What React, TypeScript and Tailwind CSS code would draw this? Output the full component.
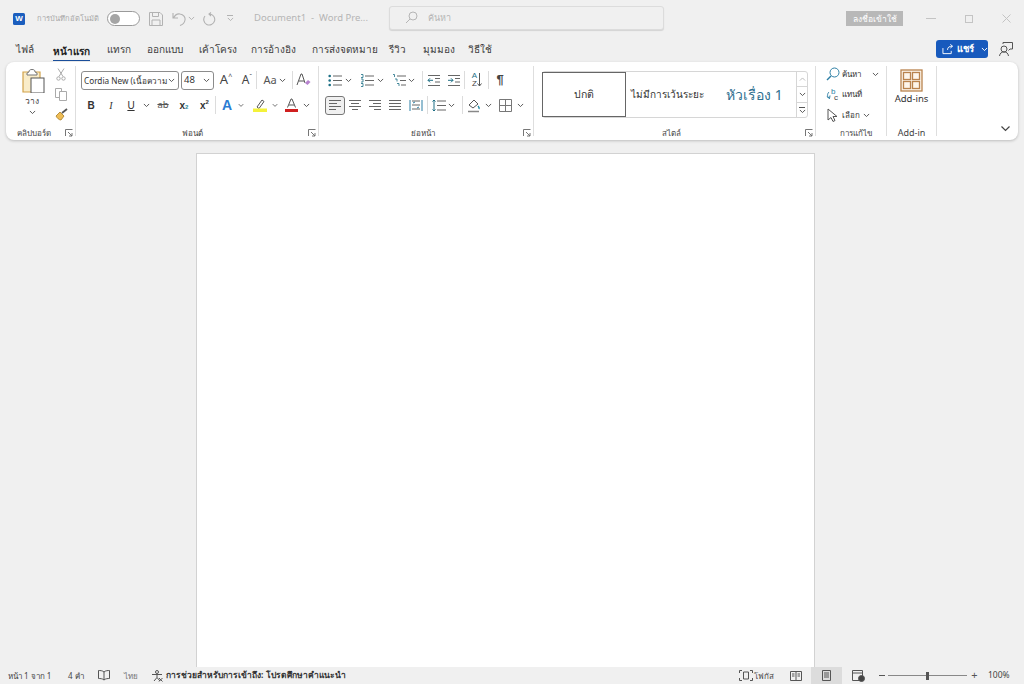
import React from "react";

const Chev = ({ c = "#555" }: { c?: string }) => (
  <svg width="7" height="4.500" viewBox="0 0 8 5" fill="none"><path d="M1 1l3 3 3-3" stroke={c} strokeWidth="1.1" /></svg>
);
const Launcher = () => (
  <svg width="8" height="8" viewBox="0 0 8 8" fill="none" stroke="#666" strokeWidth="0.9"><path d="M0.5 7V0.5H7.5" /><path d="M3 3l4 4M4 7h3V4" /></svg>
);
const Lines = ({ kind }: { kind: "l" | "c" | "r" | "j" }) => {
  const rows = { l: [[1, 13], [1, 9], [1, 13], [1, 8]], c: [[1, 13], [3, 11], [1, 13], [4, 10]], r: [[1, 13], [5, 13], [1, 13], [6, 13]], j: [[1, 13], [1, 13], [1, 13], [1, 13]] }[kind];
  return (
    <svg width="14" height="12" viewBox="0 0 14 12" stroke="#666" strokeWidth="1">
      {rows.map((r, i) => <path key={i} d={`M${r[0]} ${1.5 + i * 3}H${r[1]}`} />)}
    </svg>
  );
};
const ListIcon = ({ kind }: { kind: "b" | "n" | "m" }) => (
  <svg width="14" height="13" viewBox="0 0 14 13" fill="none">
    {kind === "b" && [2, 6.5, 11].map((y) => <circle key={y} cx="1.7" cy={y} r="1.3" fill="#1c6f85" />)}
    {kind === "n" && [2, 6.5, 11].map((y) => <path key={y} d={`M1 ${y - 1.5}h2v3H1`} stroke="#1c6f85" strokeWidth="0.8" />)}
    {kind === "m" && <path d="M1 .5h1.500v2.500M3 5h2v2.500M5 9.500h2v2.500" stroke="#1c6f85" strokeWidth="0.8" />}
    <path d={kind === "m" ? "M5 2h9M8 6.500h6M9 11h5" : "M5 2h9M5 6.500h9M5 11h9"} stroke="#666" strokeWidth="1" />
  </svg>
);
const Indent = ({ out }: { out?: boolean }) => (
  <svg width="14" height="13" viewBox="0 0 14 13" fill="none">
    <path d="M1 1.500h12M8 4.500h5M8 8h5M1 11.500h12" stroke="#666" strokeWidth="1" />
    <path d={out ? "M6 6.300H1M3 4.300l-2 2 2 2" : "M1 6.300h5M4 4.300l2 2-2 2"} stroke="#1c6f85" strokeWidth="1" />
  </svg>
);
const Sep = () => <div className="w-px h-[18px] bg-[#dcdcdc] shrink-0" />;
const Slot = ({ className = "", children }: { className?: string; children?: React.ReactNode }) => (
  <div className={`flex items-center justify-center shrink-0 h-[18px] ${className}`}>{children}</div>
);
const Group = ({ className, label, launcher, labelClass = "text-[8px]", children }: { className: string; label: string; launcher?: boolean; labelClass?: string; children: React.ReactNode }) => (
  <div className={`flex flex-col shrink-0 h-[70px] mt-[4px] border-r border-[#dedede] ${className}`}>
    <div className="flex-1 min-h-0">{children}</div>
    <div className="flex items-center h-[13px] mb-[-3px]">
      <div className={`flex-1 text-center leading-[13px] text-[#444] whitespace-nowrap ${labelClass} ${launcher ? "pr-[4px]" : ""}`}>{label}</div>
      {launcher ? <div className="w-[10px] flex justify-start shrink-0"><Launcher /></div> : null}
    </div>
  </div>
);

const tabs: [string, string, boolean?][] = [
  ["ไฟล์", "w-[37px]"],
  ["หน้าแรก", "w-[54px]", true],
  ["แทรก", "w-[40px]"],
  ["ออกแบบ", "w-[52px]"],
  ["เค้าโครง", "w-[52px]"],
  ["การอ้างอิง", "w-[61px]"],
  ["การส่งจดหมาย", "w-[77px]"],
  ["รีวิว", "w-[34px]"],
  ["มุมมอง", "w-[45px]"],
  ["วิธีใช้", "w-[40px]"],
];

export default function App() {
  return (
    <div className="w-[1024px] h-[684px] overflow-hidden flex flex-col bg-[#f0f0f0] text-[#333] font-['Noto_Sans','Liberation_Sans',sans-serif]">
      {/* title bar */}
      <div className="h-[36px] shrink-0 flex items-center pl-[13px] pt-[1px]">
        <div className="w-[12px] h-[12px] rounded-[1.5px] bg-[#1b5ebe] flex items-center justify-center text-white text-[8px] leading-none font-bold font-['Liberation_Sans',sans-serif] shrink-0">W</div>
        <div className="w-[65px] ml-[12px] text-[7.5px] text-[#a9a9a9] whitespace-nowrap shrink-0">การบันทึกอัตโนมัติ</div>
        <div className="w-[33px] h-[15px] ml-[5px] rounded-full border border-[#9a9a9a] bg-white flex items-center pl-[2px] shrink-0">
          <div className="w-[10px] h-[10px] rounded-full bg-[#a5a5a5]" />
        </div>
        <svg className="ml-[9px] shrink-0" width="14" height="14" viewBox="0 0 14 14" fill="none" stroke="#b2b2b2" strokeWidth="1"><path d="M.5.500h10.500l2.500 2.500v10.500H.5zM3.500.500v4h6v-4M3 13.500V8h8v5.500" /></svg>
        <svg className="ml-[9px] shrink-0" width="15" height="14" viewBox="0 0 15 14" fill="none" stroke="#b2b2b2" strokeWidth="1.1"><path d="M1 1v5h5M1.500 6C3 3 5.500 1.500 8 2c3.500.5 5.500 3 5 6-.4 2.500-2 4.500-5 5.500" /></svg>
        <div className="w-[9px] flex justify-center shrink-0"><Chev c="#b2b2b2" /></div>
        <svg className="ml-[6px] shrink-0" width="15" height="15" viewBox="0 0 15 15" fill="none" stroke="#b2b2b2" strokeWidth="1.1"><path d="M9 1.500l-2 1.500 2 2M7.500 3A5.500 5.500 0 1 1 3 5" /></svg>
        <div className="ml-[8px] w-[10px] flex flex-col items-center gap-[1px] shrink-0"><div className="w-[6px] h-px bg-[#b2b2b2]" /><Chev c="#b2b2b2" /></div>
        <div className="ml-[19px] w-[135px] text-[9.5px] text-[#b5b5b5] whitespace-nowrap shrink-0">Document1&nbsp; - &nbsp;Word Pre...</div>
        <div className="h-[24px] w-[275px] rounded-[3px] border border-[#dcdcdc] bg-[#f0f0f0] shadow-[0_1px_1px_rgba(0,0,0,0.12)] flex items-center pl-[15px] shrink-0 -mt-[2px]">
          <svg width="13" height="13" viewBox="0 0 13 13" fill="none" stroke="#b5b5b5" strokeWidth="1"><circle cx="8" cy="5" r="4" /><path d="M5 8l-4 4" /></svg>
          <span className="ml-[10px] text-[9px] text-[#b5b5b5]">ค้นหา</span>
        </div>
        <div className="ml-[182px] w-[57px] h-[15px] bg-[#b8b8b8] text-white text-[8.5px] leading-[15px] text-center shrink-0 whitespace-nowrap">ลงชื่อเข้าใช้</div>
        <div className="ml-[23px] w-[10px] h-px bg-[#c4c4c4] shrink-0" />
        <div className="ml-[29px] w-[8px] h-[8px] border border-[#c4c4c4] shrink-0" />
        <svg className="ml-[29px] shrink-0" width="9" height="9" viewBox="0 0 9 9" stroke="#c4c4c4" strokeWidth="1"><path d="M.5.500l8 8M8.500.500l-8 8" /></svg>
      </div>

      {/* tabs */}
      <div className="h-[26px] shrink-0 flex items-center pl-[16px] pr-[11px]">
        {tabs.map(([t, w, active]) => (
          <div key={t} className={`${w} shrink-0 h-[26px] flex items-center`}>
            <span className={active ? "h-[23px] mt-[1px] leading-[26px] text-[10px] font-bold text-[#222] border-b-[1.5px] border-[#1b4f9c] whitespace-nowrap" : "text-[10px] text-[#3c3c3c] whitespace-nowrap"}>{t}</span>
          </div>
        ))}
        <div className="ml-[428px] w-[52px] h-[18px] rounded-[3px] bg-[#185abd] flex items-center pl-[6px] shrink-0">
          <svg width="13" height="12" viewBox="0 0 13 12" fill="none" stroke="#fff" strokeWidth="1"><path d="M1 5v6h9V8M6 7c0-3 2-4 5-4M9 1l2.500 2L9 5" /></svg>
          <span className="ml-[3px] text-[9.5px] font-bold text-white whitespace-nowrap">แชร์</span>
          <div className="ml-[7px]"><Chev c="#fff" /></div>
        </div>
        <svg className="ml-[11px] shrink-0" width="14" height="15" viewBox="0 0 14 15" fill="none" stroke="#555" strokeWidth="1"><circle cx="5" cy="7" r="3" /><path d="M.5 14c.5-3 2-4 4.500-4s4 1 4.500 4M4 2V.5h9.500V7H11l-1.500 1.500" /></svg>
      </div>

      {/* ribbon */}
      <div className="mx-[6px] h-[78px] shrink-0 rounded-[8px] bg-white shadow-[0_1px_3px_rgba(0,0,0,0.22)] flex">
        {/* clipboard */}
        <Group className="w-[70px]" label="คลิปบอร์ด" launcher>
          <div className="flex h-full">
            <div className="w-[50px] pl-[15px] flex flex-col">
              <svg className="mt-[3px]" width="24" height="24" viewBox="0 0 24 24" fill="none">
                <path d="M4 3h15v20H2V3z" fill="#f9ecc9" stroke="#d1a24a" strokeWidth="1.200" />
                <path d="M8 3c0-2 1-2.500 3-2.500S14 1 14 3l2 1v2H6V4z" fill="#fff" stroke="#777" />
                <rect x="10" y="9" width="13" height="15" fill="#fff" stroke="#555" />
              </svg>
              <div className="text-[8.5px] leading-[12px] text-[#444] mt-[2px] w-[22px] text-center">วาง</div>
              <div className="w-[22px] flex justify-center mt-[3px]"><Chev /></div>
            </div>
            <div className="flex flex-col items-center w-[10px] pt-[2px] gap-[7px]">
              <svg width="10" height="13" viewBox="0 0 10 13" fill="none" stroke="#aaa" strokeWidth="1"><path d="M2 .5l5 8M8 .5l-5 8" /><circle cx="2.500" cy="10.500" r="1.700" /><circle cx="7.500" cy="10.500" r="1.700" /></svg>
              <svg width="12" height="13" viewBox="0 0 12 13" fill="none" stroke="#aaa" strokeWidth="1"><path d="M.5.500h6v9h-6z" /><path d="M4.500 3.500h7v9h-7z" fill="#fff" /></svg>
              <svg width="13" height="13" viewBox="0 0 13 13" fill="none"><path d="M1 8l4-4 4 4-3 4c-2 0-4-2-5-4z" fill="#efbd55" stroke="#a57c2a" strokeWidth=".8" /><path d="M7 5l5-4" stroke="#555" strokeWidth="1.800" /></svg>
            </div>
          </div>
        </Group>

        {/* font */}
        <Group className="w-[243px] pl-[5px]" label="ฟอนต์" launcher>
          <div className="flex items-center h-[20px] mt-[4px]">
            <div className="w-[98px] h-[19px] rounded-[3px] border border-[#8c8c8c] flex items-center pl-[2px] pr-[3px] shrink-0">
              <span className="flex-1 whitespace-nowrap text-[8.2px] leading-[12px] pt-[2px] text-[#333]">Cordia New (เนื้อความ</span><Chev />
            </div>
            <div className="ml-[2px] w-[33px] h-[19px] rounded-[3px] border border-[#8c8c8c] flex items-center pl-[2px] pr-[3px] shrink-0">
              <span className="flex-1 text-[9.5px] text-[#333]">48</span><Chev />
            </div>
            <Slot className="w-[18px] ml-[3px] text-[13px] text-[#444]">A<sup className="text-[7px]">^</sup></Slot>
            <Slot className="w-[18px] ml-[3px] text-[12px] text-[#444]">A<sup className="text-[7px]">ˇ</sup></Slot>
            <Sep />
            <Slot className="w-[16px] ml-[5px] text-[11px] text-[#555]">Aa</Slot>
            <Slot className="w-[8px]"><Chev /></Slot>
            <Slot className="w-[6px]" />
            <Sep />
            <Slot className="w-[15px] ml-[3px]">
              <svg width="15" height="14" viewBox="0 0 15 14" fill="none"><path d="M1 12L5 1h1l3 9M3 8h5" stroke="#555" /><path d="M9 10l3-3 2.500 2-3 3z" fill="#b783cf" /></svg>
            </Slot>
          </div>
          <div className="flex items-center h-[20px] mt-[5px] pl-[1px] text-[#333]">
            <Slot className="w-[18px] text-[10px] font-bold font-['Liberation_Sans',sans-serif]">B</Slot>
            <Slot className="w-[22px] text-[10px] italic font-['Liberation_Serif',serif]">I</Slot>
            <Slot className="w-[18px] text-[10px] underline font-['Liberation_Sans',sans-serif]">U</Slot>
            <Slot className="w-[12px]"><Chev /></Slot>
            <Slot className="w-[22px] text-[9.5px] line-through text-[#555]">ab</Slot>
            <Slot className="w-[20px] text-[10px] font-bold font-['Liberation_Sans',sans-serif]">x<sub className="text-[6px] text-[#2a8a9a]">2</sub></Slot>
            <Slot className="w-[21px] text-[10px] font-bold font-['Liberation_Sans',sans-serif]">x<sup className="text-[6px]">2</sup></Slot>
            <Sep />
            <Slot className="w-[22px] text-[14px] font-bold text-[#2b7cd3] font-['Liberation_Sans',sans-serif]">A</Slot>
            <Slot className="w-[6px]"><Chev /></Slot>
            <Slot className="w-[24px] ml-[4px]">
              <svg width="14" height="14" viewBox="0 0 14 14" fill="none"><path d="M4 9l5-7 2 1.500-5 7z" stroke="#555" /><rect y="10.500" width="14" height="3.500" fill="#f4f23a" /></svg>
            </Slot>
            <Slot className="w-[6px]"><Chev /></Slot>
            <Slot className="w-[22px] ml-[2px]">
              <svg width="13" height="14" viewBox="0 0 13 14" fill="none"><path d="M2.500 9.500L6 1h1l3.500 8.500M4 7h5" stroke="#555" /><rect y="11" width="13" height="3" fill="#d01f1f" /></svg>
            </Slot>
            <Slot className="w-[8px]"><Chev /></Slot>
          </div>
        </Group>

        {/* paragraph */}
        <Group className="w-[215px] pl-[7px]" label="ย่อหน้า" launcher>
          <div className="flex items-center h-[20px] mt-[4px]">
            <Slot className="w-[18px]"><ListIcon kind="b" /></Slot>
            <Slot className="w-[9px]"><Chev /></Slot>
            <Slot className="w-[20px] ml-[4px]"><ListIcon kind="n" /></Slot>
            <Slot className="w-[9px] ml-[-1px]"><Chev /></Slot>
            <Slot className="w-[18px] ml-[5px]"><ListIcon kind="m" /></Slot>
            <Slot className="w-[8px] ml-[-1px]"><Chev /></Slot>
            <Slot className="w-[7px]" /><Sep />
            <Slot className="w-[20px] ml-[1px]"><Indent out /></Slot>
            <Slot className="w-[20px]"><Indent /></Slot>
            <Sep />
            <Slot className="w-[22px] ml-[1px] text-[8px] leading-[8px] font-['Liberation_Sans',sans-serif]">
              <div className="flex flex-col items-center text-[#1c6f85]">A<span className="text-[#444]">Z</span></div>
              <svg width="5" height="14" viewBox="0 0 5 14" fill="none" stroke="#555"><path d="M2.500 0v13M.5 10.500l2 2.500 2-2.500" /></svg>
            </Slot>
            <Sep />
            <Slot className="w-[22px] text-[13px] font-bold text-[#444] font-['Liberation_Sans',sans-serif]">¶</Slot>
          </div>
          <div className="flex items-center h-[20px] mt-[5px] ml-[-1px]">
            <div className="w-[20px] h-[19px] rounded-[3px] border border-[#777] bg-[#f0f0f0] flex items-center justify-center shrink-0"><Lines kind="l" /></div>
            <Slot className="w-[20px]"><Lines kind="c" /></Slot>
            <Slot className="w-[20px]"><Lines kind="r" /></Slot>
            <Slot className="w-[20px]"><Lines kind="j" /></Slot>
            <Slot className="w-[22px]">
              <svg width="14" height="13" viewBox="0 0 14 13" fill="none"><path d="M1 1v11M13 1v11" stroke="#2d7fa5" /><path d="M3 2h8M3 6h8M3 10h8" stroke="#666" /><path d="M4 4l2-1M10 8l-2 1" stroke="#2d7fa5" /></svg>
            </Slot>
            <Sep />
            <Slot className="w-[17px] ml-[2px]">
              <svg width="14" height="13" viewBox="0 0 14 13" fill="none"><path d="M5 2h9M5 6.500h9M5 11h9" stroke="#666" /><path d="M2 1v11M.5 2.500L2 1l1.500 1.500M.5 10.500L2 12l1.500-1.500" stroke="#1c6f85" /></svg>
            </Slot>
            <Slot className="w-[9px]"><Chev /></Slot>
            <Slot className="w-[6px]" /><Sep />
            <Slot className="w-[18px] ml-[2px]">
              <svg width="14" height="15" viewBox="0 0 14 15" fill="none"><path d="M2 7l5-5 4 4-5 4z" stroke="#555" /><path d="M11 8c1 1 1.500 2 1 3" stroke="#1c8aa5" strokeWidth="1.400" /><path d="M1 13.500h11" stroke="#888" strokeWidth="1.500" /></svg>
            </Slot>
            <Slot className="w-[8px] ml-[1px]"><Chev /></Slot>
            <Slot className="w-[19px] ml-[4px]">
              <svg width="13" height="13" viewBox="0 0 13 13" fill="none" stroke="#777"><path d="M.5.500h12v12H.5zM6.500.500v12M.5 6.500h12" /></svg>
            </Slot>
            <Slot className="w-[8px] ml-[1px]"><Chev /></Slot>
          </div>
        </Group>

        {/* styles */}
        <Group className="w-[282px] pl-[8px]" label="สไตล์" launcher>
          <div className="flex h-[47px] w-[266px] mt-[5px] rounded-[3px] border border-[#d6d6d6]">
            <div className="w-[84px] h-full border-[1.5px] border-[#666] flex items-center justify-center text-[10.5px] text-[#333] shrink-0 -ml-px">ปกติ</div>
            <div className="w-[170px] flex items-center pl-[5px] shrink-0">
              <span className="w-[76px] whitespace-nowrap text-[10px] text-[#333] shrink-0">ไม่มีการเว้นระยะ</span>
              <span className="ml-[19px] text-[14px] text-[#2f6f8f] whitespace-nowrap">หัวเรื่อง 1</span>
            </div>
            <div className="flex-1 flex flex-col border-l border-[#d6d6d6]">
              <div className="flex-1 flex items-center justify-center border-b border-[#d6d6d6]"><div className="rotate-180 flex"><Chev c="#bbb" /></div></div>
              <div className="flex-1 flex items-center justify-center border-b border-[#d6d6d6]"><Chev /></div>
              <div className="flex-1 flex flex-col items-center justify-center gap-px"><div className="w-[6px] h-px bg-[#555]" /><Chev /></div>
            </div>
          </div>
        </Group>

        {/* editing */}
        <Group className="w-[71px] pl-[10px]" label="การแก้ไข">
          <div className="flex items-center h-[20px] text-[8px] text-[#333] -mt-[2px]">
            <svg className="shrink-0" width="14" height="14" viewBox="0 0 14 14" fill="none" stroke="#2d7fa5"><circle cx="8.500" cy="5.500" r="4.500" /><path d="M5 9l-4 4" strokeWidth="1.500" /></svg>
            <span className="ml-[2px] w-[30px] whitespace-nowrap">ค้นหา</span>
            <Chev />
          </div>
          <div className="flex items-center h-[20px] text-[8px] text-[#333]">
            <svg className="shrink-0" width="14" height="14" viewBox="0 0 14 14" fill="none">
              <path d="M3 5C1 7 1 10 3.500 11.500M.8 9.500l2.700 2 .5-3" stroke="#2d7fa5" />
              <text x="5" y="6.500" fontSize="8" fill="#2d7fa5" fontFamily="Liberation Sans">b</text>
              <text x="8" y="13" fontSize="8" fill="#444" fontFamily="Liberation Sans">c</text>
            </svg>
            <span className="ml-[2px] whitespace-nowrap">แทนที่</span>
          </div>
          <div className="flex items-center h-[20px] mt-[1px] text-[8px] text-[#333]">
            <svg className="shrink-0 ml-[1px]" width="11" height="14" viewBox="0 0 11 14" fill="#fff" stroke="#555"><path d="M1 1v11l3-2.500 2 4 2-1-2-4h4z" /></svg>
            <span className="ml-[4px] whitespace-nowrap">เลือก</span>
            <span className="ml-[3px]"><Chev /></span>
          </div>
        </Group>

        {/* add-in */}
        <Group className="w-[50px]" label="Add-in" labelClass="text-[9px]">
          <div className="flex flex-col items-center">
            <svg className="mt-[3px]" width="23" height="23" viewBox="0 0 23 23" fill="#fdf5ea" stroke="#b9834d" strokeWidth="1.300"><rect x="1" y="1" width="21" height="21" /><rect x="3.500" y="3.500" width="7" height="7" /><rect x="12.500" y="3.500" width="7" height="7" /><rect x="3.500" y="12.500" width="7" height="7" /><rect x="12.500" y="12.500" width="7" height="7" /></svg>
            <span className="text-[9.5px] leading-[13px] text-[#333] whitespace-nowrap">Add-ins</span>
          </div>
        </Group>

        <div className="flex-1 flex items-end justify-end pr-[8px] pb-[8px]">
          <svg width="9" height="6" viewBox="0 0 9 6" fill="none" stroke="#444" strokeWidth="1.200"><path d="M.5.500l4 4 4-4" /></svg>
        </div>
      </div>

      {/* document area */}
      <div className="flex-1 min-h-0 flex justify-center pr-[13px] pt-[13px]">
        <div className="w-[619px] bg-white border border-[#d2d2d2] border-b-0" />
      </div>

      {/* status bar */}
      <div className="h-[17px] shrink-0 flex items-center text-[8px] text-[#444] pl-[8px]">
        <span className="w-[60px] whitespace-nowrap shrink-0">หน้า 1 จาก 1</span>
        <span className="w-[30px] whitespace-nowrap shrink-0">4 คำ</span>
        <svg className="shrink-0" width="12" height="11" viewBox="0 0 12 11" fill="none" stroke="#555"><path d="M6 2C4.500.5 2 .5.500.5v8C2 8.500 4.500 8.500 6 10c1.500-1.500 4-1.500 5.500-1.500v-8C10 .5 7.500.5 6 2zM6 2v8" /></svg>
        <span className="ml-[14px] w-[27px] text-[#777] shrink-0">ไทย</span>
        <svg className="shrink-0" width="12" height="12" viewBox="0 0 12 12" fill="none" stroke="#555"><circle cx="6" cy="2" r="1.500" /><path d="M1 4.500h10M6 4.500v3L3 11M6 7.500l3 3.500" /><path d="M8 8l3.500 3.500M11.500 8L8 11.500" /></svg>
        <span className="ml-[3px] w-[573px] font-bold text-[8.5px] text-[#333] whitespace-nowrap shrink-0">การช่วยสำหรับการเข้าถึง: โปรดศึกษาคำแนะนำ</span>
        <svg className="shrink-0" width="14" height="11" viewBox="0 0 14 11" fill="none" stroke="#555"><path d="M.5 3V.5H3M11 .5h2.500V3M.5 8v2.500H3M11 10.500h2.500V8M4.500 2h5v7h-5z" /></svg>
        <span className="ml-[1px] w-[36px] whitespace-nowrap shrink-0">โฟกัส</span>
        <svg className="shrink-0" width="12" height="10" viewBox="0 0 12 10" fill="none" stroke="#555"><path d="M.5.500h11v9H.5zM6 .5v9M2 3h2.500M2 5h2.500M7.500 3H10M7.500 5H10" /></svg>
        <div className="ml-[9px] w-[31px] h-[17px] bg-[#dcdcdc] flex items-center justify-center shrink-0">
          <svg width="9" height="11" viewBox="0 0 9 11" fill="none" stroke="#555"><path d="M.5.500h8v10h-8zM2 3h5M2 5h5M2 7h5" /></svg>
        </div>
        <svg className="ml-[10px] shrink-0" width="13" height="12" viewBox="0 0 13 12" fill="none" stroke="#555"><path d="M.5.500h10v10H.5zM.5 3h10" /><circle cx="9.500" cy="8.500" r="3" fill="#444" /></svg>
        <div className="ml-[14px] w-[6px] h-px bg-[#555] shrink-0" />
        <div className="ml-[3px] w-[79px] h-[9px] flex items-center shrink-0">
          <div className="flex-1 h-px bg-[#888]" /><div className="w-[3px] h-[8px] bg-[#555]" /><div className="flex-1 h-px bg-[#888]" />
        </div>
        <span className="ml-[1px] w-[13px] text-[11px] text-[#555] shrink-0 text-center">+</span>
        <span className="ml-[7px] text-[8.5px] whitespace-nowrap">100%</span>
      </div>
    </div>
  );
}
